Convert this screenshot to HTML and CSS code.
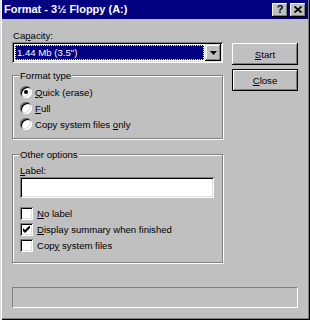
FILE: index.html
```html
<!DOCTYPE html>
<html>
<head>
<meta charset="utf-8">
<link rel="stylesheet" href="styles.css">
</head>
<body>
<div class="window">
  <div class="titlebar">
    <span class="title">Format - 3½ Floppy (A:)</span>
    <div class="caption-btns">
      <span class="cbtn help">?</span>
      <span class="cbtn close"><svg width="8" height="7" viewBox="0 0 8 7"><path d="M0.5 0.5 L7.5 6.5 M7.5 0.5 L0.5 6.5" stroke="#000" stroke-width="1.7" fill="none"/></svg></span>
    </div>
  </div>
  <div class="content">
    <div class="main">
      <div class="left">
        <div class="lbl">Ca<u>p</u>acity:</div>
        <div class="combo">
          <div class="combo-field"><span class="sel">1.44 Mb (3.5")</span></div>
          <span class="dropbtn"><svg width="7" height="4" viewBox="0 0 7 4"><polygon points="0,0 7,0 3.5,4" fill="#000"/></svg></span>
        </div>
        <div class="group g1">
          <span class="legend">Format type</span>
          <div class="opts radios">
            <div class="opt"><span class="radio on"></span><span><u>Q</u>uick (erase)</span></div>
            <div class="opt"><span class="radio"></span><span><u>F</u>ull</span></div>
            <div class="opt"><span class="radio"></span><span>Copy system files <u>o</u>nly</span></div>
          </div>
        </div>
        <div class="group g2">
          <span class="legend">Other options</span>
          <div class="lbl lbl2"><u>L</u>abel:</div>
          <div class="textbox"></div>
          <div class="opts checks">
            <div class="opt"><span class="check"></span><span><u>N</u>o label</span></div>
            <div class="opt"><span class="check"><svg width="7" height="7" viewBox="0 0 7 7"><path d="M0 2 L2 4 L7 -1 L7 2 L2 7 L0 5 Z" fill="#000"/></svg></span><span><u>D</u>isplay summary when finished</span></div>
            <div class="opt"><span class="check"></span><span>Cop<u>y</u> system files</span></div>
          </div>
        </div>
      </div>
      <div class="right">
        <div class="btn"><span><u>S</u>tart</span></div>
        <div class="btn default"><span><u>C</u>lose</span></div>
      </div>
    </div>
    <div class="progress"></div>
  </div>
</div>
</body>
</html>
```
FILE: styles.css
```css
html, body {
  margin: 0;
  padding: 0;
  background: #c0c0c0;
}
body {
  font-family: "Liberation Sans", Arial, sans-serif;
  font-size: 9.6px;
  line-height: 13px;
  color: #000;
}
u {
  text-underline-offset: 1px;
}
.window {
  width: 310px;
  height: 320px;
  box-sizing: border-box;
  padding: 0 2px 2px 2px;
  background: #c0c0c0;
  box-shadow: inset 1px 0 #dfdfdf, inset 2px 0 #fff, inset -1px -1px #000, inset -2px -2px #808080;
}
.titlebar {
  height: 19px;
  background: #000080;
  display: flex;
  align-items: center;
  justify-content: space-between;
  padding-left: 2px;
  padding-right: 2px;
}
.title {
  color: #fff;
  font-weight: bold;
  font-size: 11px;
}
.caption-btns {
  display: flex;
  gap: 2px;
}
.cbtn {
  width: 16px;
  height: 14px;
  box-sizing: border-box;
  background: #c0c0c0;
  box-shadow: inset -1px -1px #000, inset 1px 1px #fff, inset -2px -2px #808080;
  display: flex;
  align-items: center;
  justify-content: center;
  font-weight: bold;
  font-size: 11px;
  line-height: 11px;
}
.cbtn.help {
  padding-bottom: 1px;
}
.cbtn svg {
  display: block;
  margin-top: -1px;
}
.content {
  padding: 10px 10px 0 10px;
}
.main {
  display: flex;
  gap: 9px;
}
.left {
  width: 211px;
}
.lbl {
  height: 13px;
  padding-left: 1px;
}
.combo {
  height: 21px;
  box-sizing: border-box;
  padding: 2px;
  background: #fff;
  box-shadow: inset 1px 1px #808080, inset -1px -1px #fff, inset 2px 2px #000, inset -2px -2px #dfdfdf;
  display: flex;
}
.combo-field {
  flex: 1;
  padding: 1px;
  display: flex;
}
.sel {
  flex: 1;
  background: #000080;
  color: #fff;
  outline: 1px dotted #ffff60;
  outline-offset: -1px;
  padding-left: 2px;
  line-height: 15px;
}
.dropbtn {
  width: 16px;
  height: 17px;
  box-sizing: border-box;
  background: #c0c0c0;
  box-shadow: inset -1px -1px #000, inset 1px 1px #dfdfdf, inset -2px -2px #808080, inset 2px 2px #fff;
  display: flex;
  align-items: center;
  justify-content: center;
}
.dropbtn svg {
  display: block;
}
.group {
  box-sizing: border-box;
  border: 1px solid #808080;
  box-shadow: inset 1px 1px #fff, 1px 1px #fff;
  padding: 0 8px 0 7px;
}
.g1 {
  margin-top: 12px;
  height: 64px;
}
.g2 {
  margin-top: 15px;
  height: 109px;
}
.legend {
  display: block;
  width: max-content;
  height: 13px;
  margin-top: -7px;
  margin-left: -1px;
  padding: 0 1px;
  background: #c0c0c0;
}
.opts {
  margin-top: 2px;
}
.opt {
  height: 16px;
  display: flex;
  align-items: center;
  gap: 3px;
}
.radio {
  width: 12px;
  height: 12px;
  border-radius: 50%;
  background: #fff;
  box-shadow: inset 1px 1px #808080, inset -1px -1px #fff, inset 2px 2px #000, inset -2px -2px #dfdfdf;
  display: flex;
  align-items: center;
  justify-content: center;
  flex: none;
}
.radio.on::after {
  content: "";
  width: 4px;
  height: 4px;
  border-radius: 50%;
  background: #000;
}
.lbl2 {
  margin-top: 3px;
  padding-left: 0;
}
.textbox {
  height: 21px;
  background: #fff;
  box-shadow: inset 1px 1px #808080, inset -1px -1px #fff, inset 2px 2px #000, inset -2px -2px #dfdfdf;
}
.checks {
  margin-top: 7px;
}
.checks .opt {
  gap: 4px;
}
.check {
  width: 13px;
  height: 13px;
  flex: none;
  box-sizing: border-box;
  background: #fff;
  box-shadow: inset 1px 1px #808080, inset -1px -1px #fff, inset 2px 2px #000, inset -2px -2px #dfdfdf;
  display: flex;
  align-items: center;
  justify-content: center;
}
.check svg {
  display: block;
}
.right {
  width: 66px;
  padding-top: 14px;
  display: flex;
  flex-direction: column;
  gap: 4px;
}
.btn {
  height: 22px;
  box-sizing: border-box;
  background: #c0c0c0;
  box-shadow: inset -1px -1px #000, inset 1px 1px #fff, inset -2px -2px #808080;
  display: flex;
  align-items: center;
  justify-content: center;
}
.btn.default {
  border: 1px solid #000;
  box-shadow: inset 1px 1px #fff, inset -1px -1px #808080;
}
.progress {
  margin-top: 24px;
  width: 286px;
  height: 21px;
  box-sizing: border-box;
  border-top: 1px solid #808080;
  border-left: 1px solid #808080;
  border-right: 1px solid #fff;
  border-bottom: 1px solid #fff;
}
```
